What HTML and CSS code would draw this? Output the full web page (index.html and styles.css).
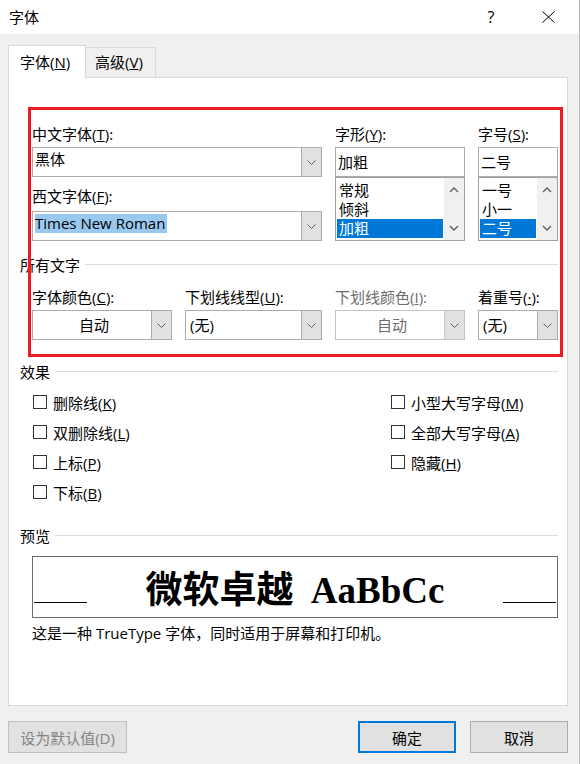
FILE: index.html
```html
<!DOCTYPE html>
<html lang="zh-CN">
<head>
<meta charset="utf-8">
<title>字体</title>
<link rel="stylesheet" href="styles.css">
</head>
<body>
<div class="dialog">
  <header class="titlebar">
    <span class="title">字体</span>
    <div class="title-buttons">
      <span class="help">?</span>
      <svg class="close" width="13" height="12" viewBox="0 0 13 12"><path d="M0.5 0.5L12.5 11.5M12.5 0.5L0.5 11.5" fill="none" stroke="#000" stroke-width="1"/></svg>
    </div>
  </header>

  <nav class="tabs">
    <div class="tab active">字体(<u>N</u>)</div>
    <div class="tab">高级(<u>V</u>)</div>
  </nav>

  <main class="panel">
    <section class="font-row">
      <div class="col col-main">
        <div class="lbl">中文字体(<u>T</u>):</div>
        <div class="combo edit">
          <span class="value">黑体</span>
          <span class="btn"><svg width="9" height="5" viewBox="0 0 9 5"><path d="M0.5 0.5L4.5 4.5L8.5 0.5" fill="none" stroke="#606060"/></svg></span>
        </div>
        <div class="lbl lbl2">西文字体(<u>F</u>):</div>
        <div class="combo edit">
          <span class="value"><span class="sel">Times New Roman</span></span>
          <span class="btn"><svg width="9" height="5" viewBox="0 0 9 5"><path d="M0.5 0.5L4.5 4.5L8.5 0.5" fill="none" stroke="#606060"/></svg></span>
        </div>
      </div>

      <div class="col col-style">
        <div class="lbl">字形(<u>Y</u>):</div>
        <div class="input">加粗</div>
        <div class="list">
          <div class="items">
            <div class="item">常规</div>
            <div class="item">倾斜</div>
            <div class="item selected">加粗</div>
          </div>
          <div class="scroll">
            <span class="arrow"><svg width="10" height="6" viewBox="0 0 10 6"><path d="M1 5L5 1L9 5" fill="none" stroke="#606060" stroke-width="1.4"/></svg></span>
            <span class="arrow"><svg width="10" height="6" viewBox="0 0 10 6"><path d="M1 1L5 5L9 1" fill="none" stroke="#606060" stroke-width="1.4"/></svg></span>
          </div>
        </div>
      </div>

      <div class="col col-size">
        <div class="lbl">字号(<u>S</u>):</div>
        <div class="input">二号</div>
        <div class="list">
          <div class="items">
            <div class="item">一号</div>
            <div class="item">小一</div>
            <div class="item selected">二号</div>
          </div>
          <div class="scroll">
            <span class="arrow"><svg width="10" height="6" viewBox="0 0 10 6"><path d="M1 5L5 1L9 5" fill="none" stroke="#606060" stroke-width="1.4"/></svg></span>
            <span class="arrow"><svg width="10" height="6" viewBox="0 0 10 6"><path d="M1 1L5 5L9 1" fill="none" stroke="#606060" stroke-width="1.4"/></svg></span>
          </div>
        </div>
      </div>
    </section>

    <div class="group-title"><span>所有文字</span></div>
    <section class="attr-row">
      <div class="col c-color">
        <div class="lbl">字体颜色(<u>C</u>):</div>
        <div class="combo pick">
          <span class="value center">自动</span>
          <span class="btn"><svg width="9" height="5" viewBox="0 0 9 5"><path d="M0.5 0.5L4.5 4.5L8.5 0.5" fill="none" stroke="#606060"/></svg></span>
        </div>
      </div>
      <div class="col c-line">
        <div class="lbl">下划线线型(<u>U</u>):</div>
        <div class="combo pick">
          <span class="value">(无)</span>
          <span class="btn"><svg width="9" height="5" viewBox="0 0 9 5"><path d="M0.5 0.5L4.5 4.5L8.5 0.5" fill="none" stroke="#606060"/></svg></span>
        </div>
      </div>
      <div class="col c-lcolor">
        <div class="lbl disabled">下划线颜色(<u>I</u>):</div>
        <div class="combo pick off">
          <span class="value center">自动</span>
          <span class="btn"><svg width="9" height="5" viewBox="0 0 9 5"><path d="M0.5 0.5L4.5 4.5L8.5 0.5" fill="none" stroke="#606060"/></svg></span>
        </div>
      </div>
      <div class="col c-emph">
        <div class="lbl">着重号(<u>·</u>):</div>
        <div class="combo pick">
          <span class="value">(无)</span>
          <span class="btn"><svg width="9" height="5" viewBox="0 0 9 5"><path d="M0.5 0.5L4.5 4.5L8.5 0.5" fill="none" stroke="#606060"/></svg></span>
        </div>
      </div>
    </section>

    <div class="group-title effects-title"><span>效果</span></div>
    <section class="effects">
      <label class="check"><span class="box"></span><span>删除线(<u>K</u>)</span></label>
      <label class="check"><span class="box"></span><span>小型大写字母(<u>M</u>)</span></label>
      <label class="check"><span class="box"></span><span>双删除线(<u>L</u>)</span></label>
      <label class="check"><span class="box"></span><span>全部大写字母(<u>A</u>)</span></label>
      <label class="check"><span class="box"></span><span>上标(<u>P</u>)</span></label>
      <label class="check"><span class="box"></span><span>隐藏(<u>H</u>)</span></label>
      <label class="check"><span class="box"></span><span>下标(<u>B</u>)</span></label>
    </section>

    <div class="group-title preview-title"><span>预览</span></div>
    <div class="preview">
      <span class="rule"></span>
      <span class="preview-text"><span class="cjk">微软卓越</span> AaBbCc</span>
      <span class="rule"></span>
    </div>
    <p class="desc">这是一种 TrueType 字体，同时适用于屏幕和打印机。</p>

    <div class="highlight-box"></div>
  </main>

  <footer class="actions">
    <button class="b b-default">设为默认值(D)</button>
    <button class="b b-ok">确定</button>
    <button class="b b-cancel">取消</button>
  </footer>
</div>
</body>
</html>
```
FILE: styles.css
```css
* { box-sizing: border-box; }
html, body { margin: 0; padding: 0; }
body {
  width: 580px;
  height: 764px;
  overflow: hidden;
  background: #f0f0f0;
  font-family: "Open Sans", "Noto Sans CJK SC", sans-serif;
  font-size: 15px;
  color: #000;
}
u { text-decoration: underline; text-decoration-thickness: 1px; }

.dialog {
  width: 580px;
  height: 764px;
  border-right: 1px solid #b9b9b9;
  display: flex;
  flex-direction: column;
}

/* title bar */
.titlebar {
  height: 34px;
  flex: none;
  background: #fff;
  display: flex;
  align-items: center;
  justify-content: space-between;
  padding-left: 9px;
}
.title { line-height: 20px; }
.title-buttons {
  display: flex;
  align-items: center;
  gap: 46px;
  padding-right: 24px;
}
.help { width: 10px; text-align: center; line-height: 20px; font-size: 16px; }
.close { display: block; }

/* tabs */
.tabs {
  display: flex;
  align-items: flex-end;
  margin-top: 11px;
  margin-bottom: -1px;
  padding-left: 8px;
  position: relative;
  z-index: 1;
  flex: none;
}
.tab {
  width: 70px;
  height: 31px;
  padding-left: 9px;
  line-height: 29px;
  background: #f0f0f0;
  border: 1px solid #d9d9d9;
  border-left: none;
  white-space: nowrap;
}
.tab.active {
  width: 78px;
  height: 33px;
  padding-left: 11px;
  line-height: 32px;
  background: #fff;
  border-left: 1px solid #d9d9d9;
  border-bottom: none;
}

/* panel */
.panel {
  position: relative;
  flex: none;
  margin-left: 8px;
  width: 560px;
  height: 629px;
  background: #fff;
  border: 1px solid #d9d9d9;
  padding-top: 44px;
}

.lbl { height: 25px; line-height: 25px; white-space: nowrap; }
.lbl2 { height: 34px; padding-top: 7px; }
.lbl.disabled { color: #6d6d6d; }

.font-row, .attr-row {
  display: flex;
  gap: 13px;
  padding-left: 23px;
}
.col-main { width: 290px; }
.col-style { width: 130px; }
.col-size { width: 80px; }

.combo {
  height: 30px;
  border: 1px solid #acacac;
  background: #fff;
  display: flex;
}
.combo .value {
  flex: 1;
  padding-left: 2px;
  white-space: nowrap;
  overflow: hidden;
  line-height: 28px;
}
.combo.edit .value { padding-top: 2px; line-height: 19px; }
.combo .value.center { text-align: center; }
.combo.pick .value { padding-left: 4px; }
.combo .btn {
  width: 20px;
  flex: none;
  background: #e1e1e1;
  border-left: 1px solid #acacac;
  display: flex;
  align-items: center;
  justify-content: center;
}
.combo .btn svg { display: block; }
.combo.off { border-color: #c4c4c4; }
.combo.off .value { color: #6d6d6d; }
.combo.off .btn { border-left-color: #c4c4c4; }
.sel { display: inline-block; background: #99c9ef; line-height: 19px; padding-right: 2px; }

.input {
  height: 30px;
  border: 1px solid #acacac;
  padding-left: 2px;
  line-height: 28px;
}
.list {
  height: 64px;
  border: 1px solid #a0a0a0;
  display: flex;
}
.items { flex: 1; padding-top: 3px; }
.item { height: 19px; line-height: 19px; padding-left: 2px; margin: 0 1px; white-space: nowrap; }
.item.selected { background: #0078d7; color: #fff; }
.scroll {
  width: 20px;
  flex: none;
  background: #f0f0f0;
  display: flex;
  flex-direction: column;
  justify-content: space-between;
  padding: 2px 0;
}
.arrow { height: 20px; display: flex; align-items: center; justify-content: center; }
.arrow svg { display: block; }

/* group headings */
.group-title {
  display: flex;
  align-items: center;
  height: 24px;
  margin-top: 11px;
  padding: 0 9px 0 11px;
  white-space: nowrap;
}
.group-title::after {
  content: "";
  flex: 1;
  height: 1px;
  margin-left: 5px;
  background: #dcdcdc;
}
.attr-row { margin-top: 9px; }
.c-color { width: 140px; }
.c-line { width: 137px; }
.c-lcolor { width: 130px; }
.c-emph { width: 80px; }

.effects-title { margin-top: 19px; }
.effects {
  display: grid;
  grid-template-columns: 358px auto;
  grid-auto-rows: 30px;
  margin-top: 4px;
  padding-left: 24px;
}
.check { display: flex; align-items: center; gap: 6px; white-space: nowrap; }
.box { width: 14px; height: 14px; border: 1px solid #333; background: #fff; flex: none; }

.preview-title { margin-top: 16px; }
.preview {
  margin: 9px 0 0 23px;
  width: 526px;
  height: 62px;
  border: 1px solid #6d6d6d;
  display: flex;
  align-items: baseline;
  padding: 0 1px;
}
.rule { width: 53px; height: 1px; background: #000; flex: none; }
.preview-text {
  flex: 1;
  text-align: center;
  font-family: "Liberation Serif", "Noto Sans CJK SC", serif;
  font-weight: bold;
  font-size: 37px;
  line-height: 60px;
  white-space: nowrap;
}
.preview-text .cjk { font-family: "Noto Sans CJK SC", sans-serif; margin-right: 8px; }
.desc { margin: 3px 0 0; padding-left: 23px; line-height: 24px; }

.highlight-box {
  position: absolute;
  left: 19px;
  top: 29px;
  width: 535px;
  height: 250px;
  border: 3px solid #ed1c24;
  pointer-events: none;
  z-index: 2;
}

/* buttons */
.actions {
  display: flex;
  margin-top: 15px;
  padding: 0 11px 0 8px;
  flex: none;
}
.b {
  height: 32px;
  font: inherit;
  font-size: 15px;
  background: #e1e1e1;
  border: 1px solid #adadad;
  color: #000;
  padding: 0;
}
.b-default { width: 119px; color: #838383; border-color: #bfbfbf; }
.b-ok { width: 98px; margin-left: auto; border: 2px solid #0078d7; }
.b-cancel { width: 98px; margin-left: 14px; }
```
